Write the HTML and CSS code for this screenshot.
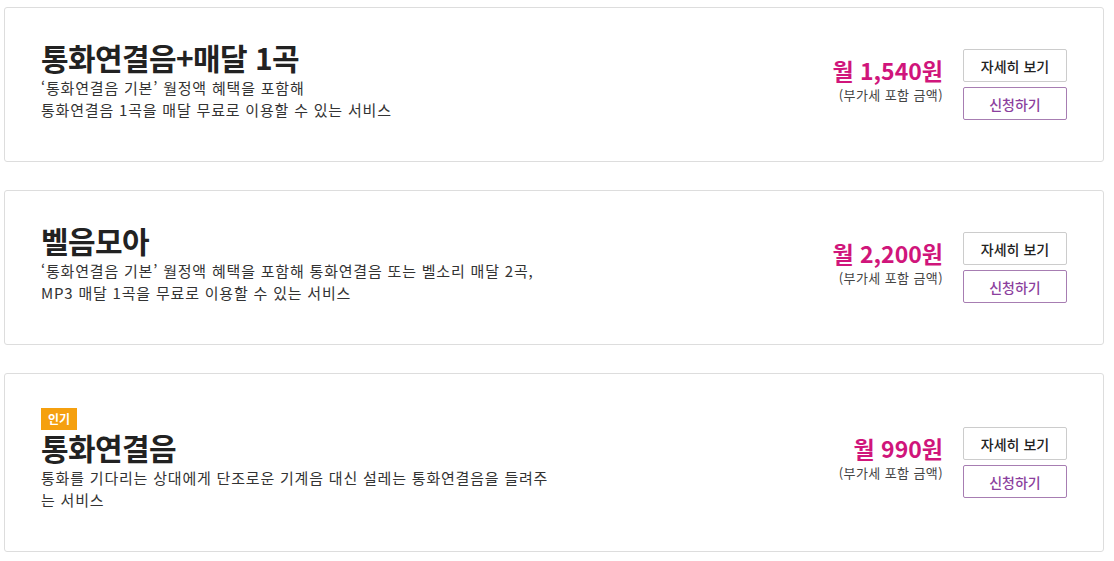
FILE: index.html
```html
<!DOCTYPE html>
<html lang="ko">

<head>
  <meta charset="UTF-8" />
  <meta name="viewport" content="width=device-width, initial-scale=1.0" />
  <title>통화연결음 상품</title>
  <link rel="stylesheet" href="styles.css">
</head>

<body>

  <ul class="product-list">
    <!-- 통화연결음+매달 1곡 -->
    <li class="product-card">
      <div class="product-info">
        <h2 class="product-title">통화연결음+매달 1곡</h2>
        <p class="product-desc">‘통화연결음 기본’ 월정액 혜택을 포함해<br />통화연결음 1곡을 매달 무료로 이용할 수 있는 서비스</p>
      </div>
      <div class="product-price">
        <strong>월 1,540원</strong>
        <span>(부가세 포함 금액)</span>
      </div>
      <div class="product-btns">
        <button class="btn">자세히 보기</button>
        <button class="btn btn-apply">신청하기</button>
      </div>
    </li>

    <!-- 벨음모아 -->
    <li class="product-card">
      <div class="product-info">
        <h2 class="product-title">벨음모아</h2>
        <p class="product-desc">‘통화연결음 기본’ 월정액 혜택을 포함해 통화연결음 또는 벨소리 매달 2곡, MP3 매달 1곡을 무료로 이용할 수 있는 서비스</p>
      </div>
      <div class="product-price">
        <strong>월 2,200원</strong>
        <span>(부가세 포함 금액)</span>
      </div>
      <div class="product-btns">
        <button class="btn">자세히 보기</button>
        <button class="btn btn-apply">신청하기</button>
      </div>
    </li>

    <!-- 통화연결음 -->
    <li class="product-card">
      <div class="product-info">
        <span class="badge">인기</span>
        <h2 class="product-title">통화연결음</h2>
        <p class="product-desc">통화를 기다리는 상대에게 단조로운 기계음 대신 설레는 통화연결음을 들려주는 서비스</p>
      </div>
      <div class="product-price">
        <strong>월 990원</strong>
        <span>(부가세 포함 금액)</span>
      </div>
      <div class="product-btns">
        <button class="btn">자세히 보기</button>
        <button class="btn btn-apply">신청하기</button>
      </div>
    </li>
  </ul>

</body>

</html>
```

FILE: styles.css
```css
* {
  margin: 0;
  padding: 0;
  box-sizing: border-box;
}

body {
  font-family: "Noto Sans CJK KR", "Noto Sans", sans-serif;
  color: #333;
  background-color: #fff;
  padding: 7px 10px 0 4px;
}

.product-list {
  list-style: none;
  display: flex;
  flex-direction: column;
  gap: 28px;
  width: 1100px;
}

.product-card {
  display: flex;
  align-items: center;
  padding: 32px 36px;
  border: 1px solid #ddd;
  border-radius: 3px;
}

.product-info {
  flex: 1;
  padding-bottom: 8px;
}

.badge {
  display: inline-block;
  margin-top: 2px;
  height: 22px;
  padding: 0 7px;
  line-height: 22px;
  font-size: 12px;
  font-weight: bold;
  color: #fff;
  background-color: #f5a00f;
  vertical-align: top;
}

.product-title {
  font-size: 30px;
  font-weight: bold;
  line-height: 35px;
  color: #222;
  letter-spacing: -0.6px;
}

.product-desc {
  max-width: 515px;
  padding-top: 2px;
  font-size: 15px;
  line-height: 22px;
  letter-spacing: 0.8px;
  color: #333;
}

.product-price {
  display: flex;
  flex-direction: column;
  align-items: flex-end;
  margin: 0 20px 13px 0;
}

.product-price strong {
  font-size: 23px;
  line-height: 34px;
  color: #d0157b;
}

.product-price span {
  font-size: 13px;
  line-height: 16px;
  letter-spacing: 0.4px;
  color: #444;
}

.product-btns {
  display: flex;
  flex-direction: column;
  gap: 5px;
}

.btn {
  width: 104px;
  height: 33px;
  font-family: inherit;
  font-size: 14px;
  font-weight: 500;
  color: #222;
  background: #fff;
  border: 1px solid #ccc;
  border-radius: 2px;
  cursor: pointer;
}

.btn-apply {
  color: #8c3f9e;
  border-color: #a77db2;
}
```
